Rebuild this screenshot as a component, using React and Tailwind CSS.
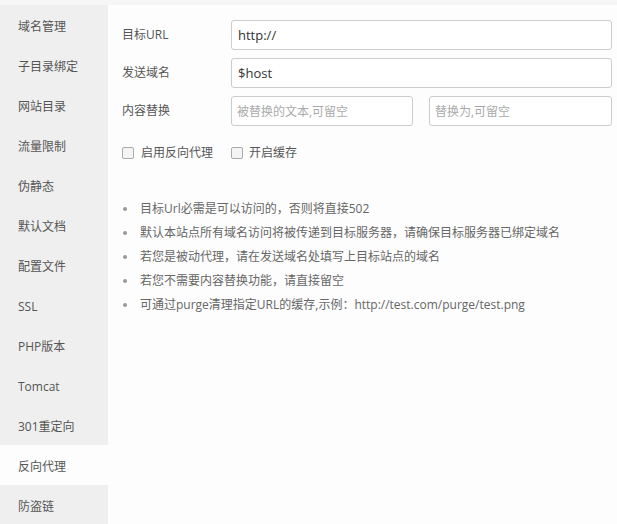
import { useState } from "react";

const menu = [
  "域名管理",
  "子目录绑定",
  "网站目录",
  "流量限制",
  "伪静态",
  "默认文档",
  "配置文件",
  "SSL",
  "PHP版本",
  "Tomcat",
  "301重定向",
  "反向代理",
  "防盗链",
];

const tips = [
  "目标Url必需是可以访问的，否则将直接502",
  "默认本站点所有域名访问将被传递到目标服务器，请确保目标服务器已绑定域名",
  "若您是被动代理，请在发送域名处填写上目标站点的域名",
  "若您不需要内容替换功能，请直接留空",
  "可通过purge清理指定URL的缓存,示例：http://test.com/purge/test.png",
];

export default function App() {
  const [url, setUrl] = useState("http://");
  const [host, setHost] = useState("$host");

  return (
    <div
      className="w-[617px] h-[524px] overflow-hidden bg-[#fdfdfd] text-[12px] text-[#555]"
      style={{ fontFamily: '"Open Sans", "Noto Sans CJK SC", sans-serif' }}
    >
      {/* 顶部细条 */}
      <div className="h-[5px] bg-[#f6f6f6]" />

      <div className="flex">
        {/* 左侧菜单 */}
        <ul className="w-[108px] shrink-0 bg-[#efefef] h-[519px]">
          {menu.map((m) => (
            <li
              key={m}
              className={
                "h-10 flex items-center pl-[18px] pt-[3px] " +
                (m === "反向代理" ? "bg-[#fdfdfd]" : "")
              }
            >
              {m}
            </li>
          ))}
        </ul>

        {/* 右侧表单 */}
        <div className="flex-1 pl-[14px] pr-[5px] pt-[15px]">
          <div className="flex flex-col gap-2">
            <div className="flex items-center h-[30px]">
              <span className="w-[109px] shrink-0">目标URL</span>
              <input
                value={url}
                onChange={(e) => setUrl(e.target.value)}
                className="flex-1 h-[30px] border border-[#ccc] rounded-[3px] px-[6px] text-[13px] text-[#333] outline-none bg-white"
              />
            </div>
            <div className="flex items-center h-[30px]">
              <span className="w-[109px] shrink-0">发送域名</span>
              <input
                value={host}
                onChange={(e) => setHost(e.target.value)}
                className="flex-1 h-[30px] border border-[#ccc] rounded-[3px] px-[6px] text-[13px] text-[#333] outline-none bg-white"
              />
            </div>
            <div className="flex items-center h-[30px]">
              <span className="w-[109px] shrink-0">内容替换</span>
              <div className="flex-1 flex gap-4">
                <input
                  placeholder="被替换的文本,可留空"
                  className="w-[182px] h-[30px] border border-[#ccc] rounded-[3px] px-[5px] text-[12px] text-[#333] placeholder:text-[#aaa] outline-none bg-white"
                />
                <input
                  placeholder="替换为,可留空"
                  className="flex-1 min-w-0 h-[30px] border border-[#ccc] rounded-[3px] px-[5px] text-[12px] text-[#333] placeholder:text-[#aaa] outline-none bg-white"
                />
              </div>
            </div>
          </div>

          <div className="flex items-center mt-[20px] h-[14px]">
            <label className="flex items-center w-[109px]">
              <span className="w-[12px] h-[12px] border border-[#aaa] rounded-[2px] bg-[#f4f4f4] mr-[7px]" />
              启用反向代理
            </label>
            <label className="flex items-center">
              <span className="w-[12px] h-[12px] border border-[#aaa] rounded-[2px] bg-[#f4f4f4] mr-[6px]" />
              开启缓存
            </label>
          </div>

          <ul className="mt-[37px] text-[#666]">
            {tips.map((t) => (
              <li key={t} className="flex items-center h-6">
                <span className="w-[4px] h-[4px] rounded-full bg-[#999] ml-[1px] mr-[13px]" />
                {t}
              </li>
            ))}
          </ul>
        </div>
      </div>
    </div>
  );
}
